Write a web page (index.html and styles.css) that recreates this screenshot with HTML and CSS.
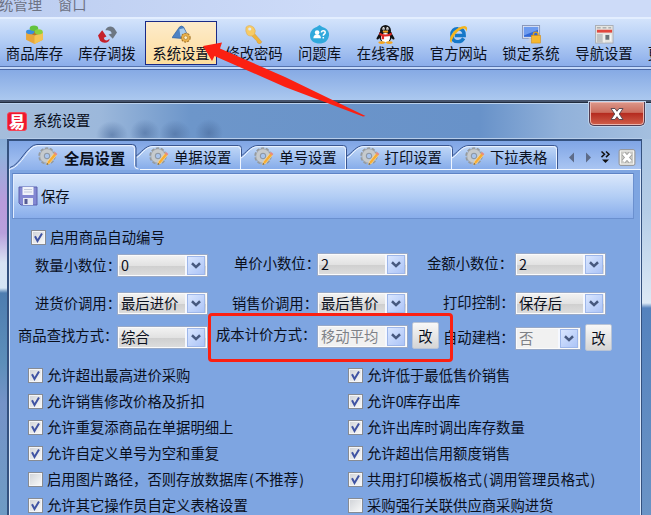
FILE: index.html
```html
<!DOCTYPE html>
<html lang="zh-CN">
<head>
<meta charset="utf-8">
<title>系统设置</title>
<link rel="stylesheet" href="styles.css">
</head>
<body>
<svg class="defs" width="0" height="0">
  <defs>
    <linearGradient id="tabfill" x1="0" y1="0" x2="0" y2="1"><stop offset="0" stop-color="#c1d8f7"/><stop offset="1" stop-color="#86acea"/></linearGradient>
    <linearGradient id="tabon" x1="0" y1="0" x2="0" y2="1"><stop offset="0" stop-color="#b9d1f7"/><stop offset="1" stop-color="#8cb0eb"/></linearGradient>
    <symbol id="gear" viewBox="0 0 20 20">
      <circle cx="9" cy="9" r="7.200" fill="none" stroke="#959a9e" stroke-width="3" stroke-dasharray="3.200 1.324"/>
      <circle cx="9" cy="9" r="5" fill="none" stroke="#a3a8ac" stroke-width="4.800"/>
      <circle cx="9" cy="9" r="5" fill="none" stroke="#c6cacd" stroke-width="3.600"/>
      <circle cx="9" cy="9" r="2.700" fill="#a9c4ec" stroke="#878e95" stroke-width=".8"/>
      <path d="M8.500 18l1-3.600 7-8.600 2.300 2-7.200 8.600z" fill="#f6ad35" stroke="#fbe2a7" stroke-width=".6"/>
      <path d="M15.700 6.600l1.400-1.500 2.300 2-1.200 1.500z" fill="#e58a84"/>
      <path d="M8.500 18l.6-2 1.400 1.200z" fill="#555"/>
    </symbol>
    <symbol id="tick" viewBox="0 0 15 15"><path d="M4 6.200l2.500 4.800L11 3.400" fill="none" stroke="#3f53a3" stroke-width="2"/></symbol>
    <symbol id="down" viewBox="0 0 17 19"><path d="M4 7l4.500 4.300L13 7" fill="none" stroke="#47597f" stroke-width="2.800"/></symbol>
    <symbol id="tabshape" viewBox="0 0 106 24">
      <path d="M0 24V12C5 9 9 .8 17 .8H102.500q3 0 3 3V24z" fill="url(#tabfill)"/>
      <path d="M0 11C5 8 9 .5 17 .5H102.500q3 0 3 3V24" fill="none" stroke="#3a5690"/>
      <path d="M0 13C6 10 9 1.600 17 1.600H101.500q3 0 3 3V24" fill="none" stroke="#eef5ff"/>
    </symbol>
  </defs>
</svg>

<div class="menubar"><span>统管理</span><span>窗口</span></div>

<div class="toolbar">
  <div class="tool t1"><svg viewBox="0 0 18 18"><path d="M1 7l8 3 8-3v7l-8 4-8-4z" fill="#e8a63a"/><path d="M9 10l8-3v7l-8 4z" fill="#f3c353"/><path d="M1 7l5-3 11 3-8 3z" fill="#ba7a24"/><ellipse cx="5" cy="6.500" rx="4" ry="2.300" fill="#398fe0"/><ellipse cx="8.500" cy="3" rx="4" ry="2.600" fill="#63c33d"/><ellipse cx="13" cy="6.500" rx="3.800" ry="2.500" fill="#8bd13c"/></svg><span>商品库存</span></div>
  <div class="tool t2"><svg viewBox="0 0 18 18"><path d="M4 5L0 10l2 5c3 3 9 2 9-2l-2 1.500c-2 .5-3-.5-3.500-2.500L8 11z" fill="#c5202b"/><path d="M7 5c1-4 7-5 9-1l2 3-4 6-4-4 3-1c-1-3-3-3-6-3z" fill="#6d7783"/></svg><span>库存调拨</span></div>
  <div class="tool t3 active"><svg viewBox="0 0 18 18"><path d="M0 12L7 2q2-2 4 0l4 8-3 3z" fill="#4d82c4" stroke="#2d5c9c" stroke-width=".6"/><path d="M7 4l4-1 4 7-7 1z" fill="#a8cdf0"/><circle cx="13" cy="12" r="4.200" fill="#e9b04a" stroke="#a4762b" stroke-dasharray="2 1"/><circle cx="13" cy="12" r="1.700" fill="#fff0c8" stroke="#a4762b" stroke-width=".6"/></svg><span>系统设置</span></div>
  <div class="tool t4"><svg viewBox="0 0 18 18"><path d="M8 7l8 9-2 2-2-1-1-2-1-1-5-5z" fill="#efb43c" stroke="#d29226" stroke-width=".4"/><path d="M1 2q3-3 7 0 3 3 1 7-4 3-7 0-2-3-1-7z" fill="#f7cb66" stroke="#d9ab57" stroke-width=".5"/><circle cx="4.500" cy="3.800" r="1.500" fill="#dceafb"/></svg><span>修改密码</span></div>
  <div class="tool t5"><svg viewBox="0 0 20 20"><path d="M10 0l3 2c5 1 7.500 5 7 9-1 6-5 8.500-10 8.500S0 17 0 11c0-4 3-8 7-9z" fill="#31a9dc"/><circle cx="7.500" cy="8" r="2.400" fill="#fff"/><path d="M3.500 14q0-4 4-4t4 4z" fill="#fff"/><path d="M12 8q0-2 2-2t2 1.800q0 1-1 1.700-1 .6-1 1.800M14 12.500v1.600" fill="none" stroke="#fff" stroke-width="1.600"/></svg><span>问题库</span></div>
  <div class="tool t6"><svg viewBox="0 0 20 20"><path d="M4 8L.5 14q0 2 2 1L5 12zM16 8l3.500 6q0 2-2 1L15 12z" fill="#111"/><ellipse cx="10" cy="11" rx="7" ry="7.500" fill="#111"/><ellipse cx="10" cy="5.500" rx="5.700" ry="5.500" fill="#151515"/><ellipse cx="10" cy="13.500" rx="4.800" ry="5" fill="#fff"/><ellipse cx="8" cy="4" rx="1.300" ry="1.900" fill="#fff"/><ellipse cx="12" cy="4" rx="1.300" ry="1.900" fill="#fff"/><circle cx="8.300" cy="4.300" r=".6"/><circle cx="11.700" cy="4.300" r=".6"/><ellipse cx="10" cy="7" rx="3" ry="1.100" fill="#f5a51e"/><path d="M3.500 8q6.500 4 13 0v2.500q-4 2-8 1.500v3H6v-3.500l-2.500-1z" fill="#df2a25"/><ellipse cx="6" cy="18.500" rx="3.500" ry="1.500" fill="#f5a51e"/><ellipse cx="14" cy="18.500" rx="3.500" ry="1.500" fill="#f5a51e"/></svg><span>在线客服</span></div>
  <div class="tool t7"><svg viewBox="0 0 20 20"><path d="M15.500 14q-2 3.500-6 3.500-6.500 0-6.500-7T9.500 4q6.500 0 6.500 7H6" fill="none" stroke="#1678c8" stroke-width="3.600"/><path d="M4 11q0-5 6-5" fill="none" stroke="#5fc0f2" stroke-width="1.400"/><path d="M3 19C-2 17 3 7 10 3q8-4 9 0 .3 2-1 4 0-4-4-3Q9 6 5 12q-3 5-2 7z" fill="#f5b51d"/></svg><span>官方网站</span></div>
  <div class="tool t8"><svg viewBox="0 0 20 20"><rect x=".5" y=".5" width="18" height="13.500" fill="#e2e8f5" stroke="#8996b7"/><rect x="2" y="2" width="15" height="10.500" fill="#3167d7"/><path d="M2 2h15v3L2 11z" fill="#6d9bef"/><path d="M7 14h5v3h3v1.500H4V17h3z" fill="#c8cfdf"/><path d="M12 12v-2q0-2.500 2.500-2.500T17 10v2" fill="none" stroke="#d8a024" stroke-width="1.500"/><rect x="10" y="11" width="9.500" height="8" fill="#f6b82f" stroke="#d18b18" stroke-width=".6"/></svg><span>锁定系统</span></div>
  <div class="tool t9"><svg viewBox="0 0 20 20"><rect x=".5" y=".5" width="18.500" height="18.500" fill="#e5e5e1" stroke="#aaaeb5"/><path d="M2 3h4M8 3h4M14 3h3" stroke="#8a8f94"/><rect x="2" y="5" width="16" height="3" fill="#e1473d"/><rect x="2" y="9.500" width="6" height="9" fill="#c0c3c4"/><rect x="11" y="10.500" width="4" height="5" fill="#6b7378"/><path d="M9.500 9.500v9M16.500 10v7" stroke="#fafafa"/></svg><span>导航设置</span></div>
  <div class="tool t10"><span>更</span></div>
</div>
<div class="band"></div>

<div class="dialog">
  <div class="titlebar">
    <div class="logo">易</div>
    <div class="title">系统设置</div>
    <div class="close"><svg width="16" height="14" viewBox="0 0 16 14"><path d="M2 1.500h4L8 4.300l2-2.800h4L10.300 7l3.700 5.500h-4L8 9.700l-2 2.800H2L5.700 7z" fill="#fff" stroke="#5a4a52"/></svg></div>
  </div>
  <div class="frame">
    <div class="tabs">
      <div class="tab first"><svg class="shape" viewBox="0 0 136 26"><path d="M0 24.500C10 23 17 .8 27 .8H122q4 0 4 4V22q0 3 4 3v1H0z" fill="url(#tabon)"/><path d="M0 23.500C10 21 17 .5 27 .5H122.500q3.500 0 3.500 3.500V23" fill="none" stroke="#34508a"/><path d="M0 25.300C12 22.500 18 1.700 27.500 1.700H121.500q3 0 3 3V21.500q0 3.500 4 3.500" fill="none" stroke="#f2f7ff"/></svg><svg class="gear"><use href="#gear"/></svg><span>全局设置</span></div>
      <div class="tab"><svg class="shape"><use href="#tabshape"/></svg><svg class="gear"><use href="#gear"/></svg><span>单据设置</span></div>
      <div class="tab"><svg class="shape"><use href="#tabshape"/></svg><svg class="gear"><use href="#gear"/></svg><span>单号设置</span></div>
      <div class="tab"><svg class="shape"><use href="#tabshape"/></svg><svg class="gear"><use href="#gear"/></svg><span>打印设置</span></div>
      <div class="tab"><svg class="shape"><use href="#tabshape"/></svg><svg class="gear"><use href="#gear"/></svg><span>下拉表格</span></div>
      <svg class="tabctl" width="72" height="20" viewBox="0 0 72 20"><path d="M6 4.500v10L1 9.500z" fill="#5d6b88"/><path d="M18 4.500v10l5-5z" fill="#5d6b88"/><path d="M33.500 3.500l3 2.800-3 2.800M38 3.500l3 2.800-3 2.800" fill="none" stroke="#111" stroke-width="1.500"/><path d="M34 11.500h7L37.500 15z" fill="#111"/><rect x="51" y="1.500" width="16" height="16" rx="2" fill="#c9c9c5" stroke="#96999f"/><rect x="52.500" y="3" width="13" height="13" fill="none" stroke="#f4f4f1"/><path d="M55.500 5.500l7 8M62.500 5.500l-7 8" stroke="#9a9a99" stroke-width="4.600"/><path d="M55.500 5.500l7 8M62.500 5.500l-7 8" stroke="#fff" stroke-width="3"/></svg>
    </div>
    <div class="page">
      <div class="savebar">
        <svg width="20" height="20" viewBox="0 0 20 20"><path d="M1 1h18v18H3l-2-2z" fill="#8388d2" stroke="#5b60ae"/><rect x="4.500" y="1" width="11" height="8" fill="#f0f3fa"/><path d="M6 3.500h8M6 6h8" stroke="#c2c9dc"/><rect x="5" y="12" width="10" height="7" fill="#e5e9f4"/><rect x="6.500" y="13" width="3" height="5" fill="#575c94"/></svg>
        <span>保存</span>
      </div>
      <div class="auto check"><i class="box"><svg><use href="#tick"/></svg></i><span>启用商品自动编号</span></div>
      <div class="fields">
        <div class="field a1"><label>数量小数位：</label><div class="select"><span>0</span><b><svg><use href="#down"/></svg></b></div></div>
        <div class="field b1"><label>单价小数位：</label><div class="select"><span>2</span><b><svg><use href="#down"/></svg></b></div></div>
        <div class="field c1"><label>金额小数位：</label><div class="select"><span>2</span><b><svg><use href="#down"/></svg></b></div></div>
        <div class="field a2"><label>进货价调用：</label><div class="select"><span>最后进价</span><b><svg><use href="#down"/></svg></b></div></div>
        <div class="field b2"><label>销售价调用：</label><div class="select"><span>最后售价</span><b><svg><use href="#down"/></svg></b></div></div>
        <div class="field c2"><label>打印控制：</label><div class="select"><span>保存后</span><b><svg><use href="#down"/></svg></b></div></div>
        <div class="field a3"><label>商品查找方式：</label><div class="select"><span>综合</span><b><svg><use href="#down"/></svg></b></div></div>
        <div class="field b3"><label>成本计价方式：</label><div class="select off"><span>移动平均</span><b><svg><use href="#down"/></svg></b></div><button>改</button></div>
        <div class="field c3"><label>自动建档：</label><div class="select off"><span>否</span><b><svg><use href="#down"/></svg></b></div><button>改</button></div>
      </div>
      <div class="options">
        <div class="check"><i class="box"><svg><use href="#tick"/></svg></i><span>允许超出最高进价采购</span></div>
        <div class="check"><i class="box"><svg><use href="#tick"/></svg></i><span>允许低于最低售价销售</span></div>
        <div class="check"><i class="box"><svg><use href="#tick"/></svg></i><span>允许销售修改价格及折扣</span></div>
        <div class="check"><i class="box"><svg><use href="#tick"/></svg></i><span>允许<em>0</em>库存出库</span></div>
        <div class="check"><i class="box"><svg><use href="#tick"/></svg></i><span>允许重复添商品在单据明细上</span></div>
        <div class="check"><i class="box"><svg><use href="#tick"/></svg></i><span>允许出库时调出库存数量</span></div>
        <div class="check"><i class="box"><svg><use href="#tick"/></svg></i><span>允许自定义单号为空和重复</span></div>
        <div class="check"><i class="box"><svg><use href="#tick"/></svg></i><span>允许超出信用额度销售</span></div>
        <div class="check"><i class="box"></i><span>启用图片路径，否则存放数据库<em>(</em>不推荐<em>)</em></span></div>
        <div class="check"><i class="box"><svg><use href="#tick"/></svg></i><span>共用打印模板格式<em>(</em>调用管理员格式<em>)</em></span></div>
        <div class="check"><i class="box"><svg><use href="#tick"/></svg></i><span>允许其它操作员自定义表格设置</span></div>
        <div class="check"><i class="box"></i><span>采购强行关联供应商采购进货</span></div>
      </div>
    </div>
  </div>
</div>

<div class="highlight"></div>
<svg class="arrow" width="170" height="80" viewBox="0 0 170 80"><path d="M3 7L22 3.500 20 9.500 85 38 165.500 77 163 77.500 85 48 14.500 17 12 22z" fill="#fb2012"/></svg>
</body>
</html>
```
FILE: styles.css
```css
* { box-sizing: border-box; }

body {
  margin: 0;
  width: 651px;
  height: 515px;
  overflow: hidden;
  position: relative;
  background: #a4c0e8;
  font: 14.35px/18px "Noto Sans CJK SC", sans-serif;
  color: #0a0f1c;
}

svg { display: block; flex: none; }
.defs { position: absolute; }

.menubar {
  height: 17px;
  display: flex;
  gap: 17px;
  background: linear-gradient(90deg, #bccdf0, #cddbf8 50%);
  color: #6d7284;
}
.menubar span { margin-top: -5px; margin-left: -1px; white-space: nowrap; }

.toolbar {
  height: 50px;
  display: flex;
  border-top: 2px solid #e3eeff;
  border-bottom: 1px solid #5573ae;
  background: linear-gradient(#d3e3fb, #b4cef5 45%, #8badea);
  padding-top: 2px;
  overflow: hidden;
}
.tool {
  flex: none;
  display: flex;
  flex-direction: column;
  align-items: center;
  width: 73px;
  height: 44px;
  padding-top: 4px;
  white-space: nowrap;
}
.tool svg { width: 19px; height: 19px; }
.t1 { width: 69px; }
.t2 { width: 76px; }
.t3 { width: 72px; }
.t4 { width: 74px; }
.t5 { width: 57px; }
.t6 { width: 75px; }
.t7 { width: 71px; }
.t8 { width: 74px; }
.t9 { width: 72px; }
.t10 { width: 30px; padding-top: 23px; }
.tool.active {
  border: 1px solid #1a2a86;
  background: linear-gradient(#fdebcb, #fddd9c);
  padding-top: 3px;
}

.band {
  height: 35px;
  border-top: 2px solid #c5d9fa;
  border-bottom: 2px solid #45536c;
  box-shadow: inset 0 1px #4b68a5;
  background: linear-gradient(#85a9e4, #abc8ef);
}

.dialog {
  height: 413px;
  padding: 0 9px 0 8px;
  border-top: 1px solid #202b3d;
  background:
    linear-gradient(#7aa0ca 0, #8fb2dc 50px, #b99bdb 100px, #b8a0dc 130px, #d8e3f3 160px, #d5e5f5 185px, #4e7db0 190px, #5d8fba 260px, #7593c8 300px, #6e9bc4 100%) left / 8px 100% no-repeat,
    linear-gradient(#a3bfde 0, #b5cde7 110px, #dce9f5 200px, #5482bd 205px, #6b94c6 100%) right / 9px 100% no-repeat,
    #6892c8;
}
.titlebar {
  height: 36px;
  margin: 0 -9px 0 -8px;
  display: flex;
  align-items: flex-start;
  padding: 8px 6px 0 7px;
  border-top: 1px solid #b9d1ee;
  background:
    radial-gradient(ellipse 16px 14px at 112px 31px, #48699a99, transparent),
    radial-gradient(ellipse 15px 14px at 145px 29px, #48699a99, transparent),
    radial-gradient(ellipse 16px 14px at 175px 30px, #48699a99, transparent),
    radial-gradient(ellipse 14px 14px at 209px 29px, #48699a99, transparent),
    linear-gradient(90deg, #a5bddb 0, #9cb8db 100px, #6d96ca 190px, #6892c9 480px, #91b1da 560px, #a4bfdf);
}
.logo {
  width: 20px;
  height: 19px;
  border-radius: 3px;
  background: #ee182f;
  border: 1px solid #f34557;
  color: #fff;
  font: 900 16px/16px "Noto Sans CJK SC", sans-serif;
  text-align: center;
}
.title { margin: -1px auto 0 6px; }
.close {
  width: 56px;
  height: 24px;
  margin: -10px -2px 0 0;
  border: 1px solid #513b50;
  border-top: 0;
  border-radius: 0 0 5px 5px;
  box-shadow: inset 0 0 0 1px #ebb4ad, 0 0 0 1px #c1d3e9;
  background: linear-gradient(#dc988b, #cb6d5d 45%, #b52c20 50%, #d0604b);
  display: flex;
  align-items: center;
  justify-content: center;
  margin-right: 0;
}

.frame {
  height: 376px;
  margin-left: -1px;
  border: 2px solid #34517e;
  border-right-width: 1px;
  border-bottom: 0;
  background: #7ea5e1;
  box-shadow: inset 1px 0 #d9e7fb, inset -1px 0 #d9e7fb, 0 -1px #b7cdea;
}
.tabs {
  height: 29px;
  display: flex;
  align-items: flex-end;
  padding-left: 1px;
  border-bottom: 1px solid #f2f7ff;
  background: linear-gradient(#7fa5e5, #a9c5f2);
}
.tab {
  position: relative;
  flex: none;
  width: 105.3px;
  height: 24px;
  display: flex;
  align-items: center;
  padding-left: 13px;
  gap: 5px;
  white-space: nowrap;
}
.tab.first {
  width: 126px;
  height: 25px;
  padding-left: 28px;
  gap: 6px;
  font-weight: 700;
  font-size: 15.3px;
}
.tab .shape { position: absolute; left: 0; top: 0; width: 106px; height: 24px; }
.tab.first .shape { width: 136px; height: 26px; z-index: 1; }
.tab .gear { position: relative; width: 20px; height: 20px; z-index: 2; }
.tab span { position: relative; z-index: 2; }
.tabctl { margin: 0 0 1px 11px; }

.page { padding: 3px 7px 0 3px; }
.savebar {
  height: 46px;
  display: flex;
  align-items: center;
  gap: 3px;
  padding-left: 5px;
  border: 1px solid #6b90cf;
  border-top-color: #5e83c5;
  box-shadow: inset 1px 1px #e3eeff;
  background: linear-gradient(#dae7fb, #b3cef5 50%, #89adeb);
}

.check { display: flex; align-items: center; gap: 4px; height: 18px; white-space: nowrap; }
.box {
  flex: none;
  width: 15px;
  height: 15px;
  border: 1px solid #878b93;
  background: linear-gradient(135deg, #cfd2d7, #fafafa);
  box-shadow: inset 0 0 0 1px #f5f6f8;
}
.box svg { width: 15px; height: 15px; margin: -1px; }
.auto { margin: 9px 0 0 19px; }
em { font-style: normal; display: inline-block; width: 7.2px; text-align: center; }

.fields {
  display: grid;
  grid-template-columns: 196px 201px 200px;
  grid-template-rows: 39px 33px 36px;
  margin-top: 6px;
}
.field { display: flex; align-items: flex-start; white-space: nowrap; }
.field label { flex: none; width: 82px; margin-top: 2px; }
.select {
  position: relative;
  flex: none;
  width: 91px;
  height: 23px;
  padding: 1px 2px 1px 3px;
  display: flex;
  justify-content: space-between;
  border: 1px solid #98a9c8;
  background: linear-gradient(#f3f3f3, #e2e2e2 50%, #cfcfcf 52%, #dedede);
  box-shadow: inset 0 0 0 1px #fbfbfb;
}
.select b {
  width: 18px;
  height: 19px;
  border: 1px solid #9eb7ea;
  box-shadow: -2px 0 #f5f8ff;
  background: linear-gradient(135deg, #d9e6ff, #acc4f7);
}
.select b svg { width: 16px; height: 17px; }
.select.off { background: #f1f1f1; color: #7e8187; }
.field button {
  flex: none;
  width: 27px;
  height: 27px;
  margin: -3px 0 0 4px;
  padding: 0;
  border: 1px solid #b9c4d6;
  border-radius: 2px;
  background: linear-gradient(#f8f8f8, #d5d5d5);
  font: inherit;
  color: inherit;
}
.a1 { padding: 2px 0 0 23px; }
.b1 { padding: 1px 0 0 26px; }
.c1 { padding: 1px 0 0 18px; }
.b1 label { width: 83px; margin-top: 1px; }
.c1 label { width: 88px; margin-top: 1px; }
.a2 { padding: 1px 0 0 23px; }
.b2 { padding: 1px 0 0 24px; }
.b2 label { width: 85px; }
.c2 { padding: 1px 0 0 34px; }
.c2 label { width: 72px; margin-top: 1px; }
.a3 { padding: 2px 0 0 6px; }
.a3 label { width: 99px; margin-top: 0; }
.b3 { padding: 1px 0 0 8px; }
.b3 label { width: 101px; margin-top: 0; }
.c3 { padding: 3px 0 0 34px; }
.c3 label { width: 72px; margin-top: 1px; }
.c3 .select { width: 66px; }

.options {
  display: grid;
  grid-template-columns: 320px 300px;
  grid-auto-rows: 26.1px;
  margin: 6px 0 0 16px;
}

.highlight {
  position: absolute;
  left: 208px;
  top: 313px;
  width: 245px;
  height: 49px;
  border: 3px solid #fb2012;
  border-radius: 4px;
}
.arrow { position: absolute; left: 200px; top: 39px; }
```
